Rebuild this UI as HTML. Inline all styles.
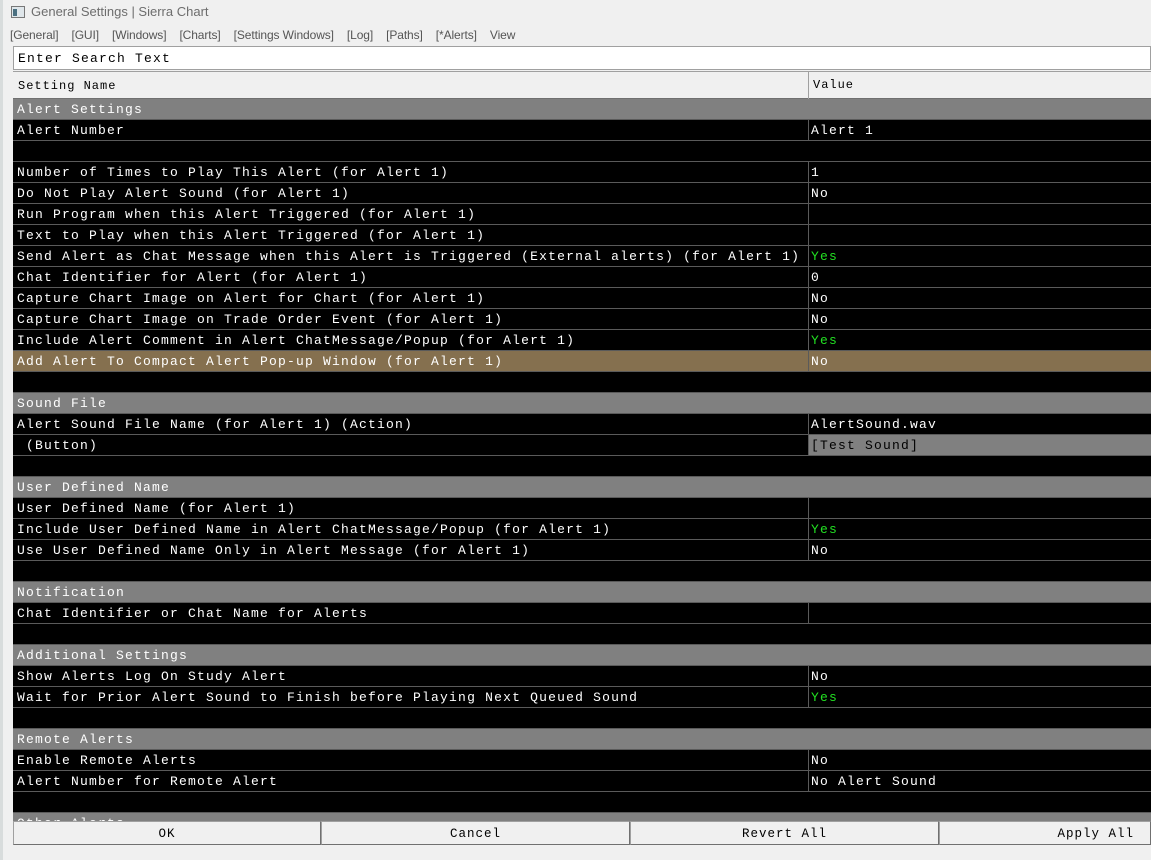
<!DOCTYPE html>
<html><head><meta charset="utf-8"><style>
*{margin:0;padding:0;box-sizing:border-box}
body{width:1151px;height:860px;overflow:hidden;background:#f0f0f0;position:relative;font-family:"Liberation Mono",monospace}
.strip{position:absolute;left:0;top:0;width:3px;height:860px;background:#d8dcdc}
.title{position:absolute;left:31px;top:4px;font:13px "Liberation Sans",sans-serif;color:#6d6d6d}
.ico{position:absolute;left:11px;top:6px;width:14px;height:12px;border:1px solid #777;background:#dfe6ea}
.ico:before{content:"";position:absolute;left:1px;top:2px;width:4px;height:7px;background:#4a6f80}
.menu{position:absolute;left:10px;top:28px;font:12px "Liberation Sans",sans-serif;color:#555;letter-spacing:-0.1px}
.menu span{margin-right:13px}
.search{position:absolute;left:13px;top:46px;width:1138px;height:24px;background:#fff;border:1px solid #a0a0a0;font-size:13px;letter-spacing:1.2px;padding:4px 0 0 4px;color:#000}
.hdr{position:absolute;left:13px;top:71px;width:1138px;height:28px;background:#f0f0f0;border-top:1px solid #a0a0a0;border-bottom:1px solid #707070;font-size:12px;letter-spacing:1px;color:#000}
.hdr .a{position:absolute;left:5px;top:7px}
.hdr .b{position:absolute;left:795px;top:0;height:27px;border-left:1px solid #a0a0a0;padding:6px 0 0 4px}
.grid{position:absolute;left:13px;top:99px;width:1138px;height:722px;overflow:hidden;background:#000}
.r{height:21px;border-bottom:1px solid #5a5a5a;position:relative;color:#fff;font-size:13px;letter-spacing:1.2px;white-space:pre;background:#000}
.r .n{position:absolute;left:4px;top:3px}
.r .v{position:absolute;left:795px;top:0;height:20px;border-left:1px solid #5a5a5a;padding:3px 0 0 2px;width:343px}
.h{background:#808080}
.hl{background:#85704f}
.g{color:#22e022}
.btn{position:absolute;top:821px;height:24px;background:#f0f0f0;border:1px solid #a0a0a0;border-right-color:#707070;border-bottom-color:#707070;font-size:12.5px;letter-spacing:1px;text-align:center;padding-top:5px;color:#000}
</style></head><body>
<div class="strip"></div>
<div class="ico"></div>
<div class="title">General Settings | Sierra Chart</div>
<div class="menu"><span>[General]</span><span>[GUI]</span><span>[Windows]</span><span>[Charts]</span><span>[Settings Windows]</span><span>[Log]</span><span>[Paths]</span><span>[*Alerts]</span><span>View</span></div>
<div class="search">Enter Search Text</div>
<div class="hdr"><span class="a">Setting Name</span><span class="b">Value</span></div>
<div class="grid">
<div class="r h"><span class="n">Alert Settings</span></div>
<div class="r"><span class="n">Alert Number</span><span class="v">Alert 1</span></div>
<div class="r"></div>
<div class="r"><span class="n">Number of Times to Play This Alert (for Alert 1)</span><span class="v">1</span></div>
<div class="r"><span class="n">Do Not Play Alert Sound (for Alert 1)</span><span class="v">No</span></div>
<div class="r"><span class="n">Run Program when this Alert Triggered (for Alert 1)</span><span class="v"></span></div>
<div class="r"><span class="n">Text to Play when this Alert Triggered (for Alert 1)</span><span class="v"></span></div>
<div class="r"><span class="n">Send Alert as Chat Message when this Alert is Triggered (External alerts) (for Alert 1)</span><span class="v g">Yes</span></div>
<div class="r"><span class="n">Chat Identifier for Alert (for Alert 1)</span><span class="v">0</span></div>
<div class="r"><span class="n">Capture Chart Image on Alert for Chart (for Alert 1)</span><span class="v">No</span></div>
<div class="r"><span class="n">Capture Chart Image on Trade Order Event (for Alert 1)</span><span class="v">No</span></div>
<div class="r"><span class="n">Include Alert Comment in Alert ChatMessage/Popup (for Alert 1)</span><span class="v g">Yes</span></div>
<div class="r hl"><span class="n">Add Alert To Compact Alert Pop-up Window (for Alert 1)</span><span class="v">No</span></div>
<div class="r"></div>
<div class="r h"><span class="n">Sound File</span></div>
<div class="r"><span class="n">Alert Sound File Name (for Alert 1) (Action)</span><span class="v">AlertSound.wav</span></div>
<div class="r"><span class="n"> (Button)</span><span class="v" style="background:#808080;color:#000">[Test Sound]</span></div>
<div class="r"></div>
<div class="r h"><span class="n">User Defined Name</span></div>
<div class="r"><span class="n">User Defined Name (for Alert 1)</span><span class="v"></span></div>
<div class="r"><span class="n">Include User Defined Name in Alert ChatMessage/Popup (for Alert 1)</span><span class="v g">Yes</span></div>
<div class="r"><span class="n">Use User Defined Name Only in Alert Message (for Alert 1)</span><span class="v">No</span></div>
<div class="r"></div>
<div class="r h"><span class="n">Notification</span></div>
<div class="r"><span class="n">Chat Identifier or Chat Name for Alerts</span><span class="v"></span></div>
<div class="r"></div>
<div class="r h"><span class="n">Additional Settings</span></div>
<div class="r"><span class="n">Show Alerts Log On Study Alert</span><span class="v">No</span></div>
<div class="r"><span class="n">Wait for Prior Alert Sound to Finish before Playing Next Queued Sound</span><span class="v g">Yes</span></div>
<div class="r"></div>
<div class="r h"><span class="n">Remote Alerts</span></div>
<div class="r"><span class="n">Enable Remote Alerts</span><span class="v">No</span></div>
<div class="r"><span class="n">Alert Number for Remote Alert</span><span class="v">No Alert Sound</span></div>
<div class="r"></div>
<div class="r h"><span class="n">Other Alerts</span></div>
</div>
<div class="btn" style="left:13px;width:308px">OK</div>
<div class="btn" style="left:321px;width:309px">Cancel</div>
<div class="btn" style="left:630px;width:309px">Revert All</div>
<div class="btn" style="left:939px;width:212px;text-align:right;padding-right:16px">Apply All</div>
</body></html>
